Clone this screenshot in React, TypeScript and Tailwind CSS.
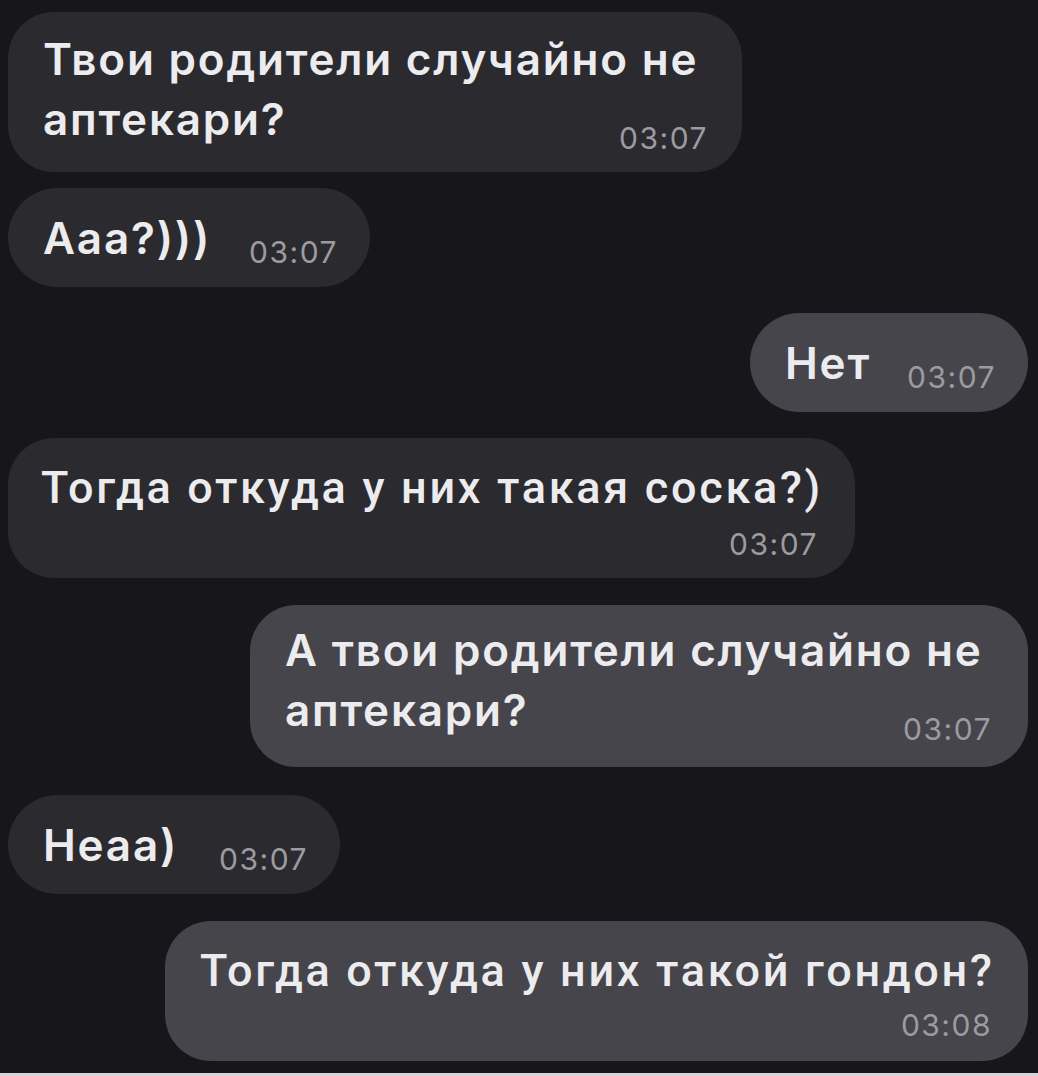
import React from "react";

const wide = "font-['Inter',sans-serif] font-semibold text-[44px] leading-[60px] tracking-[1.8px] text-[#ececef]";
const cond = "font-['Roboto',sans-serif] font-medium text-[45px] leading-[52px] tracking-[2.7px] text-[#ececef]";
const time = "font-['Inter',sans-serif] text-[30px] leading-[30px] tracking-[1.5px] text-[#9c9ba1] whitespace-nowrap";

function Single({ text, t, cls }: { text: string; t: string; cls: string }) {
  return (
    <div className={`${cls} h-[99px] rounded-[50px] flex items-center justify-between pl-[35px] pr-[32px]`}>
      <span className={`${wide} whitespace-nowrap`}>{text}</span>
      <span className={`${time} pt-[28px]`}>{t}</span>
    </div>
  );
}

export default function App() {
  return (
    <div className="w-[1038px] h-[1076px] bg-[#17161b] flex flex-col overflow-hidden">
      {/* 1 */}
      <div className="mt-[12px] ml-[8px] w-[734px] h-[160px] rounded-[46px] bg-[#2b2a2f] pl-[35px] pr-[34px] pt-[17px]">
        <div className={`${wide} whitespace-nowrap`}>Твои родители случайно не</div>
        <div className="flex justify-between items-end">
          <span className={wide}>аптекари?</span>
          <span className={`${time} mb-[-4px]`}>03:07</span>
        </div>
      </div>
      {/* 2 */}
      <Single text="Ааа?)))" t="03:07" cls="mt-[16px] ml-[8px] w-[362px] bg-[#2b2a2f]" />
      {/* 3 */}
      <Single text="Нет" t="03:07" cls="mt-[26px] self-end mr-[10px] w-[278px] bg-[#46454b]" />
      {/* 4 */}
      <div className="mt-[26px] ml-[8px] w-[847px] h-[140px] rounded-[46px] bg-[#2b2a2f] pl-[33px] pr-[37px] pt-[24px] flex flex-col">
        <div className={`${cond} whitespace-nowrap`}>Тогда откуда у них такая соска?)</div>
        <div className={`${time} self-end mt-[15px]`}>03:07</div>
      </div>
      {/* 5 */}
      <div className="mt-[27px] self-end mr-[10px] w-[778px] h-[162px] rounded-[46px] bg-[#46454b] pl-[35px] pr-[36px] pt-[15px]">
        <div className={`${wide} whitespace-nowrap`}>А твои родители случайно не</div>
        <div className="flex justify-between items-end">
          <span className={wide}>аптекари?</span>
          <span className={`${time} mb-[-4px]`}>03:07</span>
        </div>
      </div>
      {/* 6 */}
      <Single text="Неаа)" t="03:07" cls="mt-[28px] ml-[8px] w-[332px] bg-[#2b2a2f]" />
      {/* 7 */}
      <div className="mt-[27px] self-end mr-[10px] w-[863px] h-[140px] rounded-[46px] bg-[#46454b] pl-[35px] pr-[36px] pt-[24px] flex flex-col">
        <div className={`${cond} whitespace-nowrap`}>Тогда откуда у них такой гондон?</div>
        <div className={`${time} self-end mt-[13px]`}>03:08</div>
      </div>
      <div className="mt-auto h-[3px] bg-[#d6d6da]" />
    </div>
  );
}
